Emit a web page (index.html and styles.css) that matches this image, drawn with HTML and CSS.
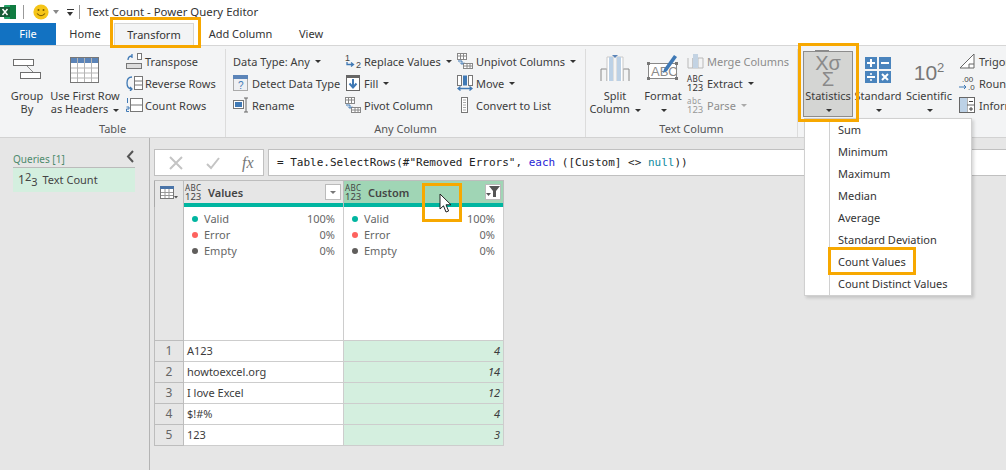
FILE: index.html
```html
<!DOCTYPE html>
<html lang="en">
<head>
    <meta charset="UTF-8">
    <title>Text Count - Power Query Editor</title>
    <link rel="stylesheet" href="styles.css">
</head>
<body>
    <header class="titlebar">
        <svg class="excel-logo" width="16" height="16" viewBox="0 0 16 16">
            <rect x="4" y="1" width="12" height="14" rx="1" fill="#21a366"/>
            <rect x="10" y="1" width="6" height="14" fill="#107c41"/>
            <rect x="0" y="3" width="10" height="10" fill="#185c37"/>
            <path d="M2.5 5L7.5 11M7.5 5L2.5 11" stroke="#fff" stroke-width="1.5"/>
        </svg>
        <span class="bar-sep"></span>
        <svg width="16" height="16" viewBox="0 0 16 16">
            <circle cx="8" cy="8" r="7.6" fill="#f5c518"/>
            <circle cx="5.5" cy="6" r="1" fill="#7a5a00"/>
            <circle cx="10.5" cy="6" r="1" fill="#7a5a00"/>
            <path d="M4 9.5Q8 14 12 9.5" fill="none" stroke="#7a5a00" stroke-width="1.1"/>
        </svg>
        <span class="qat-caret"></span>
        <span class="qat-more"></span>
        <span class="bar-sep"></span>
        <span class="title-text">Text Count - Power Query Editor</span>
    </header>

    <nav class="tabs">
        <a class="tab tab-file">File</a>
        <a class="tab tab-home">Home</a>
        <a class="tab tab-active">Transform</a>
        <a class="tab tab-add">Add Column</a>
        <a class="tab tab-view">View</a>
    </nav>

    <section class="ribbon">
        <div class="group group-table">
            <div class="group-body">
                <div class="big-btn btn-group">
                    <svg class="big-icon" width="30" height="26" viewBox="0 0 30 26">
                        <rect x="1.5" y="4.5" width="20" height="6" fill="#fff" stroke="#6e6e6e"/>
                        <rect x="8.5" y="17.5" width="20" height="6" fill="#fff" stroke="#6e6e6e"/>
                        <path d="M15 11L21 17" stroke="#8a8a8a"/>
                    </svg>
                    <span>Group<br>By</span>
                </div>
                <div class="big-btn btn-first">
                    <svg class="big-icon" width="30" height="26" viewBox="0 0 30 26">
                        <rect x="0.5" y="0.5" width="28" height="25" fill="#fff" stroke="#777"/>
                        <rect x="1" y="1" width="27" height="5" fill="#5b84b8"/>
                        <path d="M1 11H28M1 16H28M1 21H28M7.5 1V25M14.5 1V25M21.5 1V25" stroke="#b5b5b5"/>
                    </svg>
                    <span>Use First Row<br>as Headers <i class="caret"></i></span>
                </div>
                <ul class="small-col col-table">
                    <li>
                        <svg class="small-icon" width="17" height="16" viewBox="0 0 17 16">
                            <rect x="11.5" y="0.5" width="4" height="6" fill="#fff" stroke="#777"/>
                            <rect x="0.5" y="10.5" width="15" height="5" fill="#ddd" stroke="#777"/>
                            <path d="M2 7Q2 3 6 3M6 1V5" fill="none" stroke="#3f79b5" stroke-width="1.3"/>
                        </svg>
                        Transpose
                    </li>
                    <li>
                        <svg class="small-icon" width="17" height="16" viewBox="0 0 17 16">
                            <rect x="8.5" y="1.5" width="8" height="13" fill="#fff" stroke="#777"/>
                            <path d="M9 6H16M9 10H16" stroke="#777"/>
                            <path d="M6 2Q1 2 1 8T6 14M4 12L6 14L4 16" fill="none" stroke="#3f79b5" stroke-width="1.3"/>
                        </svg>
                        Reverse Rows
                    </li>
                    <li>
                        <svg class="small-icon" width="17" height="16" viewBox="0 0 17 16">
                            <rect x="4.5" y="1.5" width="12" height="13" fill="#fff" stroke="#777"/>
                            <path d="M5 8H16" stroke="#777"/>
                            <path d="M1.5 1V6M0.5 10H3V12H0.5V14.5H3" fill="none" stroke="#3f79b5"/>
                        </svg>
                        Count Rows
                    </li>
                </ul>
            </div>
            <div class="group-label">Table</div>
        </div>

        <div class="group group-any">
            <div class="group-body">
                <ul class="small-col col-any1">
                    <li>Data Type: Any <i class="caret"></i></li>
                    <li>
                        <svg class="small-icon" width="16" height="16" viewBox="0 0 16 16">
                            <rect x="0.5" y="0.5" width="14" height="15" fill="#eef0f3" stroke="#aaa"/>
                            <rect x="0" y="0" width="15" height="4" fill="#5b84b8"/>
                            <text x="5" y="14" font-size="10" fill="#3f79b5" font-family="Liberation Sans">?</text>
                        </svg>
                        Detect Data Type
                    </li>
                    <li>
                        <svg class="small-icon" width="16" height="16" viewBox="0 0 16 16">
                            <rect x="0.5" y="3.5" width="10" height="8" fill="#fff" stroke="#777"/>
                            <rect x="2" y="5" width="7" height="5" fill="#3f79b5"/>
                            <path d="M11 1H15M13 1V15M11 15H15" fill="none" stroke="#666"/>
                        </svg>
                        Rename
                    </li>
                </ul>
                <ul class="small-col col-any2">
                    <li>
                        <svg class="small-icon" width="16" height="16" viewBox="0 0 16 16">
                            <text x="0" y="8" font-size="9" fill="#444" font-family="Liberation Sans">1</text>
                            <text x="11" y="15" font-size="9" fill="#444" font-family="Liberation Sans">2</text>
                            <path d="M2 9V11.5H8M6 9.5L8.5 11.5L6 13.5" fill="none" stroke="#3f79b5" stroke-width="1.3"/>
                        </svg>
                        Replace Values <i class="caret"></i>
                    </li>
                    <li>
                        <svg class="small-icon" width="16" height="16" viewBox="0 0 16 16">
                            <rect x="1.5" y="0.5" width="13" height="15" fill="#fff" stroke="#666"/>
                            <rect x="1" y="0" width="14" height="3" fill="#666"/>
                            <path d="M8 4V12M4.5 8.5L8 12.5L11.5 8.5" fill="none" stroke="#3f79b5" stroke-width="2"/>
                        </svg>
                        Fill <i class="caret"></i>
                    </li>
                    <li>
                        <svg class="small-icon" width="16" height="16" viewBox="0 0 16 16">
                            <rect x="0.5" y="0.5" width="9" height="6" fill="#fff" stroke="#888"/>
                            <path d="M1 3H9M3.5 1V6M6.5 1V6" stroke="#888"/>
                            <rect x="6.5" y="10.5" width="9" height="5" fill="#fff" stroke="#888"/>
                            <path d="M7 13H15M10 11V15M13 11V15" stroke="#888"/>
                            <path d="M1 8H5V11M3 9.5L5 11.5L7 9.5" fill="none" stroke="#3f79b5"/>
                        </svg>
                        Pivot Column
                    </li>
                </ul>
                <ul class="small-col col-any3">
                    <li>
                        <svg class="small-icon" width="16" height="16" viewBox="0 0 16 16">
                            <rect x="0.5" y="0.5" width="9" height="6" fill="#fff" stroke="#888"/>
                            <path d="M1 3H9M3.5 1V6M6.5 1V6" stroke="#888"/>
                            <rect x="6.5" y="10.5" width="9" height="5" fill="#fff" stroke="#888"/>
                            <path d="M7 13H15M10 11V15M13 11V15" stroke="#888"/>
                            <path d="M1 8H5V11M3 9.5L5 11.5L7 9.5" fill="none" stroke="#3f79b5"/>
                        </svg>
                        Unpivot Columns <i class="caret"></i>
                    </li>
                    <li>
                        <svg class="small-icon" width="16" height="16" viewBox="0 0 16 16">
                            <rect x="0.5" y="0.5" width="4" height="10" fill="#fff" stroke="#777"/>
                            <rect x="6" y="0.5" width="4" height="10" fill="#3f79b5"/>
                            <rect x="11.5" y="0.5" width="4" height="10" fill="#fff" stroke="#777"/>
                            <path d="M1 13.5H15M3.5 11.5L1 13.5L3.5 15.5M12.5 11.5L15 13.5L12.5 15.5" fill="none" stroke="#3f79b5" stroke-width="1.3"/>
                        </svg>
                        Move <i class="caret"></i>
                    </li>
                    <li>
                        <svg class="small-icon" width="16" height="16" viewBox="0 0 16 16">
                            <rect x="4.5" y="0.5" width="6" height="15" fill="#fff" stroke="#777"/>
                            <path d="M6 3H9M6 5.5H9M6 8H9M6 10.5H9M6 13H9" stroke="#aaa"/>
                        </svg>
                        Convert to List
                    </li>
                </ul>
            </div>
            <div class="group-label">Any Column</div>
        </div>

        <div class="group group-text">
            <div class="group-body">
                <div class="big-btn btn-split">
                    <svg class="big-icon" width="30" height="30" viewBox="0 0 30 30">
                        <path d="M7 29V17H1V29M23 29V17H29V29" fill="none" stroke="#8a8a8a"/>
                        <path d="M7 29V5H13V29M17 29V5H23V29" fill="#fff" stroke="#c9c9c9"/>
                        <rect x="9" y="5" width="4" height="24" fill="#bcd1e6"/>
                        <rect x="17" y="5" width="4" height="24" fill="#bcd1e6"/>
                        <path d="M12 3H18L15 6Z" fill="#5b84b8"/>
                    </svg>
                    <span>Split<br>Column <i class="caret"></i></span>
                </div>
                <div class="big-btn btn-format">
                    <svg class="big-icon" width="34" height="30" viewBox="0 0 34 30">
                        <rect x="2.5" y="11.5" width="28" height="15" fill="#fff" stroke="#888"/>
                        <rect x="1" y="10" width="3" height="3" fill="#777"/>
                        <rect x="29" y="10" width="3" height="3" fill="#777"/>
                        <rect x="1" y="25" width="3" height="3" fill="#777"/>
                        <rect x="29" y="25" width="3" height="3" fill="#777"/>
                        <text x="5" y="24" font-size="13" fill="#8a8a8a" font-family="Liberation Sans">ABC</text>
                        <path d="M18 17L28 3L31 5L21 19L17 21Z" fill="#3f79b5"/>
                    </svg>
                    <span>Format<br><i class="caret"></i></span>
                </div>
                <ul class="small-col col-text">
                    <li class="disabled">
                        <svg class="small-icon" width="17" height="16" viewBox="0 0 17 16">
                            <path d="M1 5V15H16V5H11V15M6 15V5Z" fill="none" stroke="#b9b9b9"/>
                            <rect x="6" y="1" width="5" height="14" fill="#c3d3e3"/>
                        </svg>
                        Merge Columns
                    </li>
                    <li>
                        <span class="type-icon type-dark">ABC<br>123</span>
                        Extract <i class="caret"></i>
                    </li>
                    <li class="disabled">
                        <span class="type-icon type-parse">abc<br>123</span>
                        Parse <i class="caret caret-off"></i>
                    </li>
                </ul>
            </div>
            <div class="group-label">Text Column</div>
        </div>

        <div class="group group-number">
            <div class="group-body">
                <div class="big-btn btn-stats">
                    <div class="stat-glyphs"><span class="overline">X</span>σ<br>Σ</div>
                    <span>Statistics<br><i class="caret"></i></span>
                </div>
                <div class="big-btn btn-standard">
                    <svg class="big-icon" width="27" height="27" viewBox="0 0 27 27">
                        <rect width="12" height="12" fill="#4a84bd"/>
                        <rect x="14" width="12" height="12" fill="#4a84bd"/>
                        <rect y="14" width="12" height="12" fill="#4a84bd"/>
                        <rect x="14" y="14" width="12" height="12" fill="#4a84bd"/>
                        <path d="M2 6H10M6 2V10M16 6H24M2 20H10M17 17L23 23M23 17L17 23" stroke="#fff" stroke-width="2"/>
                        <circle cx="6" cy="17" r="1" fill="#fff"/>
                        <circle cx="6" cy="23" r="1" fill="#fff"/>
                    </svg>
                    <span>Standard<br><i class="caret"></i></span>
                </div>
                <div class="big-btn btn-sci">
                    <div class="sci-glyph">10<sup>2</sup></div>
                    <span>Scientific<br><i class="caret"></i></span>
                </div>
                <ul class="small-col col-number">
                    <li>
                        <svg class="small-icon" width="17" height="16" viewBox="0 0 17 16">
                            <path d="M1 15L15 1V15Z" fill="#fff" stroke="#666"/>
                            <path d="M10 15V11H15" fill="none" stroke="#666"/>
                        </svg>
                        Trigonometry
                    </li>
                    <li>
                        <svg class="small-icon" width="17" height="16" viewBox="0 0 17 16">
                            <text x="3" y="7" font-size="8" fill="#444" font-family="Liberation Sans">.00</text>
                            <text x="9" y="15" font-size="8" fill="#444" font-family="Liberation Sans">.0</text>
                            <path d="M0 12H7M5 10L7 12L5 14" fill="none" stroke="#3f79b5"/>
                        </svg>
                        Rounding
                    </li>
                    <li>
                        <svg class="small-icon" width="17" height="16" viewBox="0 0 17 16">
                            <rect x="0.5" y="0.5" width="15" height="15" fill="#fff" stroke="#666"/>
                            <path d="M8 1V15M1 8H15" stroke="#666"/>
                            <path d="M10 4.5H14M12 10V14M10 12H14" stroke="#444"/>
                            <rect x="1" y="1" width="7" height="7" fill="#bcd1e6"/>
                            <rect x="1" y="8" width="7" height="7" fill="#bcd1e6"/>
                        </svg>
                        Information
                    </li>
                </ul>
            </div>
        </div>
    </section>

    <main class="workspace">
        <aside class="queries">
            <div class="queries-head">
                <span>Queries [1]</span>
                <svg width="9" height="13" viewBox="0 0 9 13"><path d="M7 1L2 6.5L7 12" fill="none" stroke="#555" stroke-width="2"/></svg>
            </div>
            <div class="query-item"><span class="query-type">1<sup>2</sup><sub>3</sub></span> Text Count</div>
        </aside>

        <div class="editor">
            <div class="formula-row">
                <div class="formula-btns">
                    <svg width="16" height="16" viewBox="0 0 16 16"><path d="M2 2L14 14M14 2L2 14" stroke="#c4c4c4" stroke-width="2"/></svg>
                    <svg width="16" height="16" viewBox="0 0 16 16"><path d="M2 9L6 13L14 3" fill="none" stroke="#c4c4c4" stroke-width="2"/></svg>
                    <span class="fx">fx</span>
                </div>
                <div class="formula">= Table.SelectRows(#"Removed Errors", <span class="kw">each</span> ([Custom] &lt;&gt; <span class="kw-null">null</span>))</div>
            </div>

            <table class="grid">
                <thead>
                    <tr class="head-row">
                        <th class="corner">
                            <svg width="18" height="14" viewBox="0 0 18 14">
                                <rect x="0.5" y="0.5" width="13" height="12" fill="#fff" stroke="#777"/>
                                <rect x="0" y="0" width="14" height="3" fill="#4a74a8"/>
                                <path d="M1 6.5H13M1 9.5H13M5 3V12M9 3V12" stroke="#999"/>
                                <path d="M14 10H18L16 12.5Z" fill="#555"/>
                            </svg>
                        </th>
                        <th class="col-head">
                            <div class="head-inner">
                                <span class="type-icon">ABC<br>123</span>
                                <span class="head-name">Values</span>
                                <span class="filter-btn"><i class="caret caret-grey"></i></span>
                            </div>
                        </th>
                        <th class="col-head col-custom">
                            <div class="head-inner">
                                <span class="type-icon">ABC<br>123</span>
                                <span class="head-name">Custom</span>
                                <span class="filter-btn">
                                    <svg width="14" height="12" viewBox="0 0 14 12"><path d="M3 0H14L10 5V11H7V5Z" fill="#555"/><path d="M0 7H5L2.5 10Z" fill="#555"/></svg>
                                </span>
                            </div>
                        </th>
                    </tr>
                </thead>
                <tbody>
                    <tr class="profile-row">
                        <td class="num-cell"></td>
                        <td>
                            <ul class="profile">
                                <li><i class="dot dot-valid"></i>Valid<b>100%</b></li>
                                <li><i class="dot dot-error"></i>Error<b>0%</b></li>
                                <li><i class="dot dot-empty"></i>Empty<b>0%</b></li>
                            </ul>
                        </td>
                        <td>
                            <ul class="profile">
                                <li><i class="dot dot-valid"></i>Valid<b>100%</b></li>
                                <li><i class="dot dot-error"></i>Error<b>0%</b></li>
                                <li><i class="dot dot-empty"></i>Empty<b>0%</b></li>
                            </ul>
                        </td>
                    </tr>
                    <tr><td class="num-cell">1</td><td>A123</td><td class="count-cell">4</td></tr>
                    <tr><td class="num-cell">2</td><td>howtoexcel.org</td><td class="count-cell">14</td></tr>
                    <tr><td class="num-cell">3</td><td>I love Excel</td><td class="count-cell">12</td></tr>
                    <tr><td class="num-cell">4</td><td>$!#%</td><td class="count-cell">4</td></tr>
                    <tr><td class="num-cell">5</td><td>123</td><td class="count-cell">3</td></tr>
                </tbody>
            </table>
        </div>
    </main>

    <ul class="stats-menu">
        <li>Sum</li>
        <li>Minimum</li>
        <li>Maximum</li>
        <li>Median</li>
        <li>Average</li>
        <li>Standard Deviation</li>
        <li>Count Values</li>
        <li>Count Distinct Values</li>
    </ul>

    <div class="callout callout-tab"></div>
    <div class="callout callout-stats"></div>
    <div class="callout callout-head"></div>
    <div class="callout callout-count"></div>

    <svg class="pointer" width="13" height="21" viewBox="0 0 13 21">
        <path d="M1 1V16L4.5 12.8L7 19L9.6 18L7 11.8H12Z" fill="#fff" stroke="#222" stroke-width="1"/>
    </svg>
</body>
</html>
```

FILE: styles.css
```css
* {
    margin: 0;
    padding: 0;
    box-sizing: border-box;
}

html, body {
    width: 1006px;
    height: 470px;
    overflow: hidden;
}

body {
    position: relative;
    font-family: 'Noto Sans', 'Open Sans', sans-serif;
    font-size: 11px;
    color: #3c3c3c;
    background: #e6e6e6;
    display: flex;
    flex-direction: column;
}

ul {
    list-style: none;
}

/* title bar */
.titlebar {
    height: 23px;
    background: #fff;
    display: flex;
    align-items: center;
}

.bar-sep {
    width: 1px;
    height: 14px;
    background: #999;
    margin: 0 9px 0 7px;
}

.qat-caret {
    width: 0;
    height: 0;
    border: 3px solid transparent;
    border-top: 4px solid #888;
    border-bottom: 0;
    margin: 0 8px 0 4px;
}

.qat-more {
    width: 7px;
    height: 6px;
    border-top: 1px solid #333;
    position: relative;
    margin-right: -2px;
}

.qat-more::after {
    content: "";
    position: absolute;
    left: 0;
    top: 2px;
    border: 3.5px solid transparent;
    border-top: 4px solid #333;
    border-bottom: 0;
}

.title-text {
    font-size: 11.4px;
    color: #333;
    margin-left: -2px;
}

/* tabs */
.tabs {
    height: 23px;
    background: #fff;
    display: flex;
    align-items: stretch;
    border-bottom: 1px solid #d6d6d6;
}

.tab {
    line-height: 22px;
    text-align: center;
    color: #333;
}

.tab-file {
    width: 56px;
    background: #1272c2;
    color: #fff;
}

.tab-home {
    width: 58px;
}

.tab-active {
    width: 80px;
    background: #f3f4f5;
    border: 1px solid #d6d6d6;
    border-bottom: 0;
}

.tab-add {
    width: 91px;
    margin-left: 1px;
}

.tab-view {
    width: 50px;
}

/* ribbon */
.ribbon {
    height: 92px;
    background: #f3f4f5;
    border-bottom: 1px solid #d2d2d2;
    display: flex;
}

.group {
    display: flex;
    flex-direction: column;
    border-right: 1px solid #dcdcdc;
    margin: 3px 0 0;
}

.group-body {
    flex: 1;
    display: flex;
    padding-top: 1px;
}

.group-label {
    height: 18px;
    padding-top: 1px;
    text-align: center;
    color: #555;
    line-height: 18px;
}

.group-table { width: 226px; }
.group-any { width: 360px; }
.group-text { width: 212px; }
.group-number { flex: 1; border-right: 0; }

.big-btn {
    display: flex;
    flex-direction: column;
    align-items: center;
    text-align: center;
    line-height: 13px;
    height: 66px;
    flex-shrink: 0;
}

.big-icon {
    flex-shrink: 0;
}

.btn-group { width: 36px; margin-left: 9px; padding-top: 5px; }
.btn-group .big-icon { margin-bottom: 8px; }
.btn-first { width: 76px; margin-left: 2px; padding-top: 7px; white-space: nowrap; }
.btn-first .big-icon { margin-bottom: 6px; }

.btn-split { width: 44px; margin-left: 7px; white-space: nowrap; padding-top: 2px; }
.btn-format { width: 46px; margin-left: 3px; padding-top: 2px; }
.btn-split .big-icon, .btn-format .big-icon { margin-bottom: 7px; }

.btn-stats {
    width: 50px;
    margin: 1px 0 0 5px;
    background: #d4d5d3;
    border: 1px solid #8c8c8c;
    padding-top: 3px;
}

.stat-glyphs {
    font-size: 20px;
    line-height: 16px;
    color: #8a8a8a;
    height: 31px;
    font-family: 'Liberation Sans', sans-serif;
    margin-bottom: 3px;
}

.overline {
    border-top: 1px solid #8a8a8a;
    padding-top: 1px;
}

.btn-standard { width: 50px; padding-top: 7px; }
.btn-standard .big-icon { margin-bottom: 5px; }
.btn-sci { width: 52px; padding-top: 9px; }

.sci-glyph {
    font-family: 'Liberation Sans', sans-serif;
    font-size: 21px;
    line-height: 27px;
    color: #777;
    margin-bottom: 3px;
}

.sci-glyph sup {
    font-size: 13px;
    vertical-align: 8px;
    line-height: 0;
}

.small-col li {
    height: 22px;
    display: flex;
    align-items: center;
    gap: 3px;
    white-space: nowrap;
}

.small-icon {
    flex-shrink: 0;
}

.col-table { margin-left: 3px; }
.col-table li { gap: 2px; }
.col-any1 { margin-left: 7px; width: 112px; }
.col-any2 { width: 112px; }
.col-text { margin-left: 1px; }
.col-number { margin-left: 4px; overflow: hidden; width: 47px; }

.disabled {
    color: #8c8c8c;
}

.caret {
    display: inline-block;
    width: 0;
    height: 0;
    border: 3px solid transparent;
    border-top: 3px solid #333;
    border-bottom: 0;
    vertical-align: middle;
    margin-left: 2px;
}

.caret-off {
    border-top-color: #aaa;
}

.caret-grey {
    border-top-color: #777;
    margin: 0;
}

/* ABC over 123 data type badge, the digits run larger than the letters */
.type-icon {
    display: inline-block;
    font-size: 9.5px;
    line-height: 9px;
    width: 17px;
    flex-shrink: 0;
    font-weight: 400;
    color: #444;
    white-space: nowrap;
}

.type-icon::first-line {
    font-size: 8px;
    letter-spacing: 0.4px;
}

.type-dark {
    color: #333;
}

.type-parse {
    color: #999;
}

/* main area */
.workspace {
    flex: 1;
    display: flex;
    min-height: 0;
}

.queries {
    width: 150px;
    flex-shrink: 0;
    border-right: 1px solid #b4b4b4;
    padding: 15px 13px 0;
}

.queries-head {
    height: 15px;
    border-bottom: 1px solid #bbb;
    color: #4d8a6c;
    font-size: 10px;
    line-height: 13px;
    display: flex;
    justify-content: space-between;
    margin-right: 1px;
}

.queries-head svg {
    margin-top: -3px;
}

.query-item {
    height: 24px;
    background: #d4efdf;
    line-height: 24px;
    padding-left: 5px;
    color: #444;
    margin-right: 1px;
    display: flex;
    gap: 5px;
}

.query-type {
    font-size: 12px;
}

.query-type sup, .query-type sub {
    font-size: 11px;
    line-height: 0;
    vertical-align: 3px;
}

.query-type sub {
    vertical-align: -2px;
}

.editor {
    flex: 1;
    padding: 11px 0 0 4px;
}

.formula-row {
    display: flex;
    gap: 4px;
    height: 27px;
    margin-right: -1px;
}

.formula-btns {
    width: 110px;
    background: #fff;
    border: 1px solid #c0c0c0;
    display: flex;
    align-items: center;
    gap: 21px;
    padding-left: 13px;
}

.fx {
    font-family: 'Liberation Serif', serif;
    font-style: italic;
    font-size: 16px;
    color: #777;
}

.formula {
    flex: 1;
    background: #fff;
    border: 1px solid #c0c0c0;
    border-right: 0;
    font-family: 'DejaVu Sans Mono', monospace;
    font-size: 11px;
    line-height: 25px;
    padding-left: 8px;
    color: #222;
    white-space: nowrap;
}

.kw { color: #1f1fd6; }
.kw-null { color: #0f8a9e; }

/* data grid */
.grid {
    margin-top: 4px;
    width: 350px;
    border-collapse: collapse;
    table-layout: fixed;
    background: #fff;
}

.grid td, .grid th {
    border: 1px solid #cdcdcd;
    padding: 0 3px;
    height: 21px;
    text-align: left;
    font-weight: 400;
}

.grid th:first-child, .grid td:first-child {
    width: 29px;
    border-left: 1px solid #a9a9a9;
    text-align: center;
}

.grid td.num-cell {
    background: #e6e6e6;
    color: #666;
    border-color: #bdbdbd;
    font-size: 12px;
}

.head-row th {
    height: 26px;
    background: #e6e6e6;
    border-color: #bdbdbd;
    border-bottom: 0;
    padding: 0;
    vertical-align: top;
}

.corner {
    padding-top: 5px !important;
}

.col-head {
    border-bottom: 0;
}

.head-inner {
    height: 22px;
    display: flex;
    align-items: center;
    padding: 0 2px 0 1px;
    gap: 6px;
}

.col-head::after {
    content: "";
    display: block;
    height: 4px;
    background: #00b5a0;
}

.col-custom .head-inner {
    background: #a0d5b5;
}

.head-name {
    flex: 1;
    font-weight: 600;
    color: #444;
}

.filter-btn {
    width: 16px;
    height: 16px;
    background: #fff;
    border: 1px solid #bbb;
    display: flex;
    align-items: center;
    justify-content: center;
}

.profile-row td {
    height: 133px;
    vertical-align: top;
    border-top: 0;
    padding: 4px 8px 0 8px;
}

.profile li {
    height: 16px;
    line-height: 16px;
    display: flex;
    align-items: center;
    color: #666;
}

.profile b {
    margin-left: auto;
    font-weight: 400;
}

.dot {
    width: 6px;
    height: 6px;
    border-radius: 50%;
    margin-right: 6px;
}

.dot-valid { background: #00b5a0; }
.dot-error { background: #fd625e; }
.dot-empty { background: #605e5c; }

.count-cell {
    background: #d4efdf;
    text-align: right !important;
    font-style: italic;
}

/* statistics dropdown */
.stats-menu {
    position: absolute;
    left: 804px;
    top: 118px;
    width: 168px;
    height: 178px;
    background: #fff;
    border: 1px solid #d0d0d0;
    box-shadow: 2px 2px 3px rgba(0, 0, 0, 0.15);
}

.stats-menu::before {
    content: "";
    position: absolute;
    left: 24px;
    top: 0;
    bottom: 0;
    width: 1px;
    background: #d0d0d0;
}

.stats-menu li {
    height: 22px;
    line-height: 22px;
    padding-left: 33px;
    color: #333;
    white-space: nowrap;
}

/* orange annotation boxes */
.callout {
    position: absolute;
    border: 3px solid #f7a800;
    pointer-events: none;
}

.callout-tab { left: 110px; top: 17px; width: 91px; height: 31px; }
.callout-stats { left: 798px; top: 43px; width: 61px; height: 79px; }
.callout-head { left: 422px; top: 183px; width: 40px; height: 39px; }
.callout-count { left: 828px; top: 247px; width: 88px; height: 28px; }

.pointer {
    position: absolute;
    left: 439px;
    top: 193px;
}
```
